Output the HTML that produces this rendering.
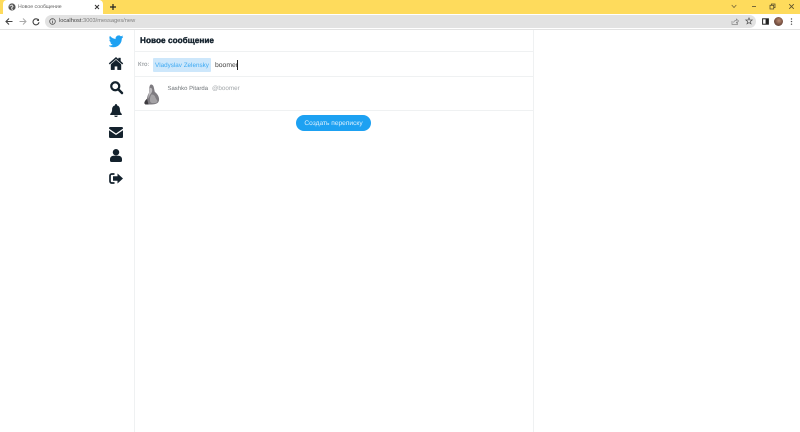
<!DOCTYPE html>
<html lang="ru">
<head>
<meta charset="utf-8">
<title>Новое сообщение</title>
<style>
html,body{margin:0;padding:0;width:800px;height:432px;overflow:hidden;background:#fff;font-family:"Liberation Sans","Noto Sans CJK SC",sans-serif;text-rendering:geometricPrecision;}
#w{position:absolute;left:0;top:0;width:800px;height:432px;overflow:hidden;filter:blur(.3px);}
.a{position:absolute;white-space:nowrap;}
svg{position:absolute;display:block;overflow:visible;}
</style>
</head>
<body>
<div id="w">
<!-- Browser frame -->
<div class="a" style="left:0;top:0;width:800px;height:14px;background:#fedb5c;"></div>
<div class="a" style="left:3px;top:0;width:100px;height:14px;background:#fff;border-radius:4px 4px 0 0;"></div>
<svg style="left:8px;top:3px" width="8" height="8" viewBox="0 0 8 8"><circle cx="4" cy="4" r="3.6" fill="#555"/><path d="M1.5 3.200 4 2 5 3.500 3.500 5 4.500 7" fill="none" stroke="#ddd" stroke-width="1"/></svg>
<div class="a" style="left:18px;top:3px;font-size:5.200px;line-height:8px;color:#666;">Новое сообщение</div>
<svg style="left:94px;top:4px" width="6" height="6" viewBox="0 0 6 6"><path d="M1 1 5 5M5 1 1 5" stroke="#333" stroke-width="1"/></svg>
<svg style="left:109px;top:3px" width="8" height="8" viewBox="0 0 8 8"><path d="M4 1V7M1 4H7" stroke="#222" stroke-width="1.200"/></svg>
<svg style="left:731px;top:4px" width="6" height="5" viewBox="0 0 6 5"><path d="M.7 1 3 3.500 5.300 1" fill="none" stroke="#77683a" stroke-width=".8"/></svg>
<div class="a" style="left:752px;top:6px;width:4px;height:1px;background:#77683a;"></div>
<svg style="left:769px;top:3px" width="7" height="7" viewBox="0 0 7 7"><path d="M1 2.300H4.700V6H1ZM2.400 2.300V1H6V4.600H4.700" fill="none" stroke="#5a4f2c" stroke-width=".8"/></svg>
<svg style="left:788px;top:3px" width="7" height="7" viewBox="0 0 7 7"><path d="M1.200 1.200 5.800 5.800M5.800 1.200 1.200 5.800" stroke="#5a4f2c" stroke-width=".8"/></svg>

<div class="a" style="left:0;top:14px;width:800px;height:15px;background:#fff;"></div>
<div class="a" style="left:0;top:29px;width:800px;height:1px;background:#e2e2e2;"></div>
<svg style="left:5px;top:17px" width="8" height="9" viewBox="0 0 8 9"><path d="M7.500 4.500H1.500M4 1.500 1 4.500 4 7.500" fill="none" stroke="#444" stroke-width="1.100"/></svg>
<svg style="left:19px;top:17px" width="8" height="9" viewBox="0 0 8 9"><path d="M.5 4.500H6.500M4 1.500 7 4.500 4 7.500" fill="none" stroke="#aaa" stroke-width="1"/></svg>
<svg style="left:32px;top:18px" width="8" height="8" viewBox="0 0 8 8"><path d="M6.600 2.300A3 3 0 1 0 7 4.200" fill="none" stroke="#444" stroke-width="1.100"/><path d="M7 .6V3H4.600Z" fill="#444"/></svg>
<div class="a" style="left:45px;top:15px;width:711px;height:13px;background:#e2e2e2;border-radius:7px;"></div>
<svg style="left:49px;top:18px" width="7" height="7" viewBox="0 0 7 7"><circle cx="3.500" cy="3.500" r="2.800" fill="none" stroke="#555" stroke-width=".8"/><path d="M3.500 3V5.200M3.500 1.800V2.400" stroke="#555" stroke-width=".8"/></svg>
<div class="a" style="left:59px;top:17px;font-size:5.700px;line-height:9px;color:#808080;"><span style="color:#444">localhost</span>:3003/messages/new</div>
<svg style="left:731px;top:18px" width="8" height="7" viewBox="0 0 8 7"><path d="M1 3V6.400H6.600V4.500M2.600 4.600C3 3 4.200 2.400 5.400 2.400V1L7.600 3 5.400 5V3.700" fill="none" stroke="#888" stroke-width=".7"/></svg>
<svg style="left:745px;top:17px" width="8" height="8" viewBox="0 0 8 8"><path d="M4 .9 4.900 3H7.200L5.400 4.500 6 6.900 4 5.600 2 6.900 2.600 4.500.8 3H3.100Z" fill="none" stroke="#555" stroke-width=".7"/></svg>
<svg style="left:762px;top:18px" width="7" height="7" viewBox="0 0 7 7"><rect x=".6" y=".8" width="5.800" height="5.400" fill="none" stroke="#222" stroke-width="1"/><rect x="3.600" y="1" width="2.800" height="5" fill="#222"/></svg>
<div class="a" style="left:774px;top:17px;width:9px;height:9px;border-radius:50%;background:radial-gradient(circle at 55% 40%,#b98a72 0,#7d5545 50%,#4d3a35 100%);"></div>
<svg style="left:790px;top:18px" width="3" height="8" viewBox="0 0 3 8"><circle cx="1.500" cy="1" r=".7" fill="#555"/><circle cx="1.500" cy="3.600" r=".7" fill="#555"/><circle cx="1.500" cy="6.200" r=".7" fill="#555"/></svg>

<!-- Columns -->
<div class="a" style="left:134px;top:30px;width:1px;height:402px;background:#eff1f2;"></div>
<div class="a" style="left:533px;top:30px;width:1px;height:402px;background:#eff1f2;"></div>

<!-- Sidebar icons -->
<svg style="left:109px;top:35px" width="14" height="13" viewBox="0 0 24 22"><path fill="#1da1f2" stroke="#1da1f2" stroke-width=".8" d="M24 3.200c-.9.4-1.800.7-2.800.8 1-.6 1.800-1.600 2.200-2.700-1 .6-2 1-3.100 1.200A4.900 4.900 0 0 0 11.900 7C7.800 6.800 4.200 4.900 1.700 1.900A4.900 4.900 0 0 0 3.200 8.500c-.8 0-1.600-.2-2.200-.6 0 2.400 1.700 4.400 3.900 4.900-.7.200-1.500.2-2.200.1.600 1.900 2.400 3.300 4.600 3.400A9.900 9.900 0 0 1 0 18.300 14 14 0 0 0 7.500 20.500c9.100 0 14.300-7.700 14-14.600 1-.7 1.800-1.600 2.500-2.700z"/></svg>
<svg style="left:109px;top:57px" width="14" height="13" viewBox="0 0 28 25"><path fill="#14222d" stroke="#14222d" stroke-width=".8" d="M14 0 0 12.200l1.500 1.800L14 3.200 26.500 14l1.500-1.800-5-4.400V1.500h-4v2.900ZM14 5.600 4 14.200V25h7v-7h6v7h7V14.200Z"/></svg>
<svg style="left:110px;top:81px" width="13" height="13" viewBox="0 0 26 26"><circle cx="10.500" cy="10.500" r="8" fill="none" stroke="#14222d" stroke-width="4.500"/><path d="M16.500 16.500 24 24" stroke="#14222d" stroke-width="5" stroke-linecap="round"/></svg>
<svg style="left:110px;top:104px" width="12" height="13" viewBox="0 0 24 26"><path fill="#14222d" d="M12 0c-1.200 0-2 .9-2 2v.8C6.500 3.700 4.200 6.800 4.200 10.500c0 5.500-1.800 7.400-3.700 9.300-.7.800-.2 2.200 1 2.200h21c1.200 0 1.700-1.400 1-2.200-1.900-1.900-3.700-3.800-3.700-9.300 0-3.700-2.300-6.800-5.800-7.700V2c0-1.100-.8-2-2-2ZM8.500 23.300a3.500 2.700 0 0 0 7 0Z"/></svg>
<svg style="left:109px;top:127px" width="14" height="11" viewBox="0 0 28 22"><path fill="#14222d" d="M2.500 0h23A2.500 2.500 0 0 1 28 2.500v.8L14 13 0 3.300v-.8A2.500 2.500 0 0 1 2.500 0ZM0 6.500 14 16 28 6.500v13a2.500 2.500 0 0 1-2.500 2.500h-23A2.500 2.500 0 0 1 0 19.500Z"/></svg>
<svg style="left:110px;top:149px" width="12" height="13" viewBox="0 0 24 26"><circle cx="12" cy="6.500" r="6.500" fill="#14222d"/><path fill="#14222d" d="M7 13.500h10c4 0 7 3 7 7V23a3 3 0 0 1-3 3H3a3 3 0 0 1-3-3v-2.500c0-4 3-7 7-7Z"/></svg>
<svg style="left:109px;top:173px" width="14" height="11" viewBox="0 0 28 22"><path fill="none" stroke="#14222d" stroke-width="3.400" d="M11 2H5.500A3.500 3.500 0 0 0 2 5.500v11A3.500 3.500 0 0 0 5.500 20H11"/><path fill="#14222d" d="M17 1 28 11 17 21v-5.500H8v-9h9Z"/></svg>

<!-- Header -->
<div class="a" style="left:140px;top:34.700px;font-size:8.200px;line-height:12px;font-weight:700;color:#14222d;-webkit-text-stroke:.35px #14222d;letter-spacing:.05px;">Новое сообщение</div>
<div class="a" style="left:135px;top:51px;width:398px;height:1px;background:#eff1f2;"></div>

<!-- Recipient row -->
<div class="a" style="left:138px;top:60.500px;font-size:6px;line-height:9px;color:#7a8186;">Кто:</div>
<div class="a" style="left:153px;top:58px;width:58px;height:14px;background:#cde7fb;border-radius:1px;"></div>
<div class="a" style="left:155px;top:60.500px;font-size:6.300px;line-height:10px;color:#3ca9f3;">Vladyslav Zelensky</div>
<div class="a" style="left:215px;top:60.500px;font-size:6.800px;line-height:10px;color:#444;">boomer</div>
<div class="a" style="left:237px;top:60px;width:1px;height:10px;background:#222;"></div>
<div class="a" style="left:135px;top:76px;width:398px;height:1px;background:#eff1f2;"></div>

<!-- User row -->
<svg style="left:143px;top:84px" width="18" height="21" viewBox="0 0 18 21">
<path fill="#7e7b80" d="M8 .5c1.600 0 2.600 1.300 2.900 3.200l.9 4.200c2 1.500 3.700 3.700 4.200 6.300.3 2-.2 3.700-1.500 4.800-1.300 1-3.500 1.500-6.500 1.500H3.500C1.700 20.500.9 19.200 1.700 17.700c.7-1.300 1.500-2.200 2.300-2.900.2-2.300 1-4.300 2-5.900.1-1.700.1-3.300.3-4.700C6.500 2.500 6.900.5 8 .5Z"/>
<path fill="#bdbbbe" d="M7 4c1-.4 2 .3 2.200 1.500.2 1.500-.3 3-1.200 4-1.300 1.500-2 3-2.200 5C4.800 13.500 6 9 6.300 6.500 6.400 5.500 6.500 4.500 7 4Z"/>
<path fill="#a5a3a6" d="M8.500 10.500c1.500-.3 3 .6 3.500 2 .6 1.700 1.400 3 2.300 4 .5 1-.2 2-1.500 2.400-2 .5-4.300.3-5.300-.7C6.500 16.500 7 12 8.500 10.500Z"/>
<path fill="#3e3c40" d="M1.700 17.700c.7-1.300 1.500-2.200 2.300-2.900l1.500 5.700H3.500C1.700 20.500.9 19.200 1.700 17.700Z"/>
</svg>
<div class="a" style="left:167.500px;top:83.700px;font-size:5.950px;line-height:10px;color:#6f7478;letter-spacing:.02px;">Sashko Pitarda</div>
<div class="a" style="left:212px;top:83.700px;font-size:6.300px;line-height:10px;color:#a2a6a9;">@boomer</div>
<div class="a" style="left:135px;top:110px;width:398px;height:1px;background:#eff1f2;"></div>

<!-- Button -->
<div class="a" style="left:296px;top:115px;width:75px;height:16px;background:#1da1f2;border-radius:8px;"></div>
<div class="a" style="left:296px;top:118.500px;width:75px;color:#dff1fd;font-size:6.600px;line-height:10px;text-align:center;">Создать переписку</div>
</div>
</body>
</html>
